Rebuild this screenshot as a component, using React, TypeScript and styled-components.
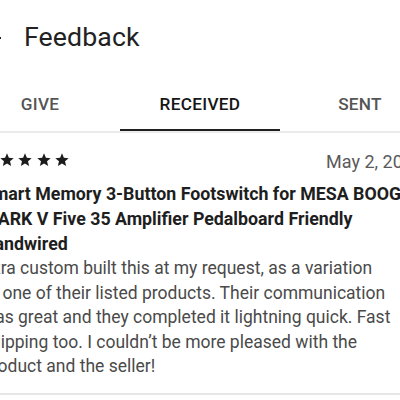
import styled, { createGlobalStyle } from 'styled-components'

const GlobalStyle = createGlobalStyle`
  html, body {
    margin: 0;
    padding: 0;
    background: #fff;
    overflow: hidden;
  }
  body {
    font-family: Roboto, "Noto Sans", "Liberation Sans", sans-serif;
    -webkit-font-smoothing: antialiased;
  }
`

// the screen is wider than the window; it is cut on both sides
const Screen = styled.div`
  width: 480px;
  margin-left: -40px;
  background: #fff;
`

const Header = styled.header`
  height: 77px;
  box-sizing: border-box;
  padding: 0 0 4px 21px;
  display: flex;
  align-items: center;
  gap: 19px;
`

const BackButton = styled.button`
  width: 24px;
  height: 24px;
  padding: 0;
  margin-top: 2px;
  border: none;
  background: none;
  color: #222;
  display: flex;
`

const Title = styled.h1`
  margin: 0;
  font-size: 26.7px;
  font-weight: 400;
  color: #222;
  letter-spacing: 0.1px;
`

const Tabs = styled.nav`
  display: grid;
  grid-template-columns: repeat(3, 1fr);
  border-bottom: 2px solid #ebebeb;
`

const Tab = styled.div<{ $active?: boolean }>`
  position: relative;
  height: 54px;
  display: flex;
  align-items: center;
  justify-content: center;
  font-size: 17.2px;
  font-weight: 500;
  letter-spacing: 0.3px;
  color: ${(p) => (p.$active ? '#161616' : '#555')};

  &::after {
    content: '';
    display: ${(p) => (p.$active ? 'block' : 'none')};
    position: absolute;
    left: 0;
    right: 0;
    bottom: 0;
    height: 2px;
    background: #1f1f1f;
  }
`

const Review = styled.article`
  padding: 17px 17px 14px 22px;
  border-bottom: 2px solid #e6e6e6;
`

const Meta = styled.div`
  height: 24px;
  display: flex;
  align-items: center;
  justify-content: space-between;
  margin-bottom: 7px;
`

const Stars = styled.div`
  display: flex;
  gap: 2.5px;
  margin: -4px 0 0 -2px;
  color: #1c1c1c;
`

const DateText = styled.span`
  font-size: 18px;
  line-height: 24px;
  color: #5a5a5a;
`

const ItemName = styled.h2`
  margin: 0;
  font-size: 17.8px;
  line-height: 25px;
  font-weight: 700;
  color: #1e1e1e;
  white-space: nowrap;
`

const Comment = styled.p`
  margin: 0;
  font-size: 17.5px;
  line-height: 24.5px;
  color: #4a4a4a;
  white-space: nowrap;
`

const Line = styled.span`
  display: block;
`

const Star = () => (
  <svg width="16" height="16" viewBox="0 0 24 24" fill="currentColor">
    <path d="M12 17.27L18.18 21l-1.64-7.03L22 9.24l-7.19-.61L12 2 9.19 8.63 2 9.24l5.46 4.73L5.82 21z" />
  </svg>
)

const nameLines = [
  'Smart Memory 3-Button Footswitch for MESA BOOGIE',
  'MARK V Five 35 Amplifier Pedalboard Friendly',
  'Handwired',
]

const commentLines = [
  'Ezra custom built this at my request, as a variation',
  'of one of their listed products. Their communication',
  'was great and they completed it lightning quick. Fast',
  'shipping too. I couldn\u2019t be more pleased with the',
  'product and the seller!',
]

export default function App() {
  return (
    <>
      <GlobalStyle />
      <Screen>
        <Header>
          <BackButton aria-label="Back">
            <svg width="24" height="24" viewBox="0 0 24 24" fill="currentColor">
              <path d="M20 11H7.83l5.59-5.59L12 4l-8 8 8 8 1.41-1.41L7.83 13H20v-2z" />
            </svg>
          </BackButton>
          <Title>Feedback</Title>
        </Header>
        <Tabs>
          <Tab>GIVE</Tab>
          <Tab $active>RECEIVED</Tab>
          <Tab>SENT</Tab>
        </Tabs>
        <Review>
          <Meta>
            <Stars>
              {[0, 1, 2, 3, 4].map((i) => (
                <Star key={i} />
              ))}
            </Stars>
            <DateText>May 2, 2023</DateText>
          </Meta>
          <ItemName>
            {nameLines.map((l) => (
              <Line key={l}>{l}</Line>
            ))}
          </ItemName>
          <Comment>
            {commentLines.map((l) => (
              <Line key={l}>{l}</Line>
            ))}
          </Comment>
        </Review>
      </Screen>
    </>
  )
}
